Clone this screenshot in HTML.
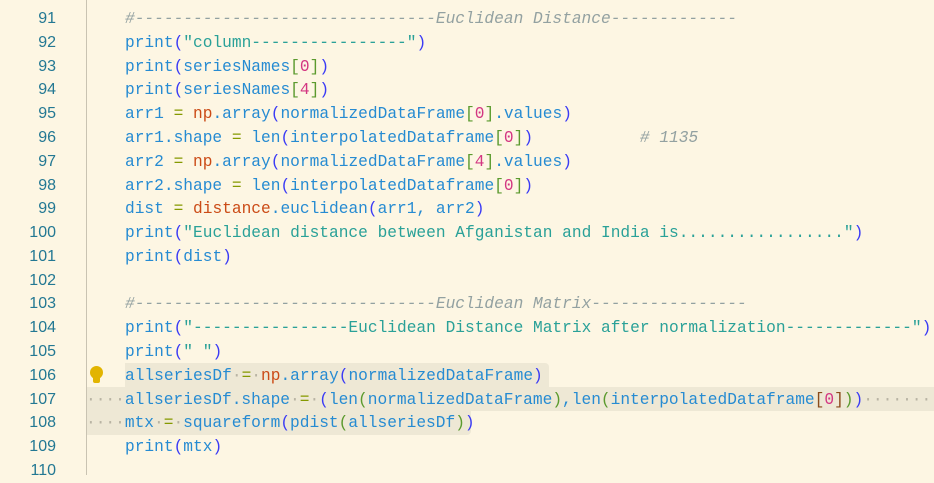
<!DOCTYPE html>
<html><head><style>
html,body{margin:0;width:934px;height:475px;overflow:hidden;background:#fdf6e3;font-family:"Liberation Mono",monospace;font-size:16.2px;}
.gut{position:absolute;left:0;top:0;width:86px;height:475px;border-right:1px solid #c9c3b2;}
.ln{position:absolute;left:0;width:56px;text-align:right;color:#237893;font-family:"Liberation Sans",sans-serif;font-size:16px;height:24px;line-height:24px;}
.cl{position:absolute;left:125px;white-space:pre;height:24px;line-height:24px;color:#268bd2;}
.hl{position:absolute;background:#eee8d5;height:24px;}
.c{color:#93a1a1;font-style:italic}
.s{color:#2aa198}
.n{color:#d33682}
.o{color:#859900}
.r{color:#cb4b16}
.p{color:#3b3bf5}
.b{color:#5b9a2e}
.q{color:#8a4a1a}
.w{color:#b8b3a3}
</style></head><body>
<div class="gut"></div>
<div class="hl" style="left:125px;top:363px;width:424px;border-radius:0 4px 0 0"></div>
<div class="hl" style="left:87px;top:387px;width:847px"></div>
<div class="hl" style="left:87px;top:411px;width:384px;border-radius:0 0 4px 0"></div>
<div style="position:absolute;left:90px;top:366px;width:13px;height:13px;border-radius:50%;background:#e2b400"></div>
<div style="position:absolute;left:93px;top:378px;width:7px;height:5px;background:#e2b400;border-radius:0 0 2px 2px"></div>

<div class="ln" style="top:-17px">90</div>
<div class="ln" style="top:7px">91</div><div class="cl" style="top:7px"><span class="c">#-------------------------------Euclidean Distance-------------</span></div>
<div class="ln" style="top:31px">92</div><div class="cl" style="top:31px">print<span class="p">(</span><span class="s">"column----------------"</span><span class="p">)</span></div>
<div class="ln" style="top:55px">93</div><div class="cl" style="top:55px">print<span class="p">(</span>seriesNames<span class="b">[</span><span class="n">0</span><span class="b">]</span><span class="p">)</span></div>
<div class="ln" style="top:78px">94</div><div class="cl" style="top:78px">print<span class="p">(</span>seriesNames<span class="b">[</span><span class="n">4</span><span class="b">]</span><span class="p">)</span></div>
<div class="ln" style="top:102px">95</div><div class="cl" style="top:102px">arr1 <span class="o">=</span> <span class="r">np</span>.array<span class="p">(</span>normalizedDataFrame<span class="b">[</span><span class="n">0</span><span class="b">]</span>.values<span class="p">)</span></div>
<div class="ln" style="top:126px">96</div><div class="cl" style="top:126px">arr1.shape <span class="o">=</span> len<span class="p">(</span>interpolatedDataframe<span class="b">[</span><span class="n">0</span><span class="b">]</span><span class="p">)</span>           <span class="c"># 1135</span></div>
<div class="ln" style="top:150px">97</div><div class="cl" style="top:150px">arr2 <span class="o">=</span> <span class="r">np</span>.array<span class="p">(</span>normalizedDataFrame<span class="b">[</span><span class="n">4</span><span class="b">]</span>.values<span class="p">)</span></div>
<div class="ln" style="top:174px">98</div><div class="cl" style="top:174px">arr2.shape <span class="o">=</span> len<span class="p">(</span>interpolatedDataframe<span class="b">[</span><span class="n">0</span><span class="b">]</span><span class="p">)</span></div>
<div class="ln" style="top:197px">99</div><div class="cl" style="top:197px">dist <span class="o">=</span> <span class="r">distance</span>.euclidean<span class="p">(</span>arr1, arr2<span class="p">)</span></div>
<div class="ln" style="top:221px">100</div><div class="cl" style="top:221px">print<span class="p">(</span><span class="s">"Euclidean distance between Afganistan and India is................."</span><span class="p">)</span></div>
<div class="ln" style="top:245px">101</div><div class="cl" style="top:245px">print<span class="p">(</span>dist<span class="p">)</span></div>
<div class="ln" style="top:269px">102</div>
<div class="ln" style="top:292px">103</div><div class="cl" style="top:292px"><span class="c">#-------------------------------Euclidean Matrix----------------</span></div>
<div class="ln" style="top:316px">104</div><div class="cl" style="top:316px">print<span class="p">(</span><span class="s">"----------------Euclidean Distance Matrix after normalization-------------"</span><span class="p">)</span></div>
<div class="ln" style="top:340px">105</div><div class="cl" style="top:340px">print<span class="p">(</span><span class="s">" "</span><span class="p">)</span></div>
<div class="ln" style="top:364px">106</div><div class="cl" style="top:364px">allseriesDf<span class="w">·</span><span class="o">=</span><span class="w">·</span><span class="r">np</span>.array<span class="p">(</span>normalizedDataFrame<span class="p">)</span></div>
<div class="ln" style="top:388px">107</div><div class="cl" style="top:388px;left:86px"><span class="w">····</span>allseriesDf.shape<span class="w">·</span><span class="o">=</span><span class="w">·</span><span class="p">(</span>len<span class="b">(</span>normalizedDataFrame<span class="b">)</span>,len<span class="b">(</span>interpolatedDataframe<span class="q">[</span><span class="n">0</span><span class="q">]</span><span class="b">)</span><span class="p">)</span><span class="w">········</span></div>
<div class="ln" style="top:411px">108</div><div class="cl" style="top:411px;left:86px"><span class="w">····</span>mtx<span class="w">·</span><span class="o">=</span><span class="w">·</span>squareform<span class="p">(</span>pdist<span class="b">(</span>allseriesDf<span class="b">)</span><span class="p">)</span></div>
<div class="ln" style="top:435px">109</div><div class="cl" style="top:435px">print<span class="p">(</span>mtx<span class="p">)</span></div>
<div class="ln" style="top:459px">110</div>
</body></html>
